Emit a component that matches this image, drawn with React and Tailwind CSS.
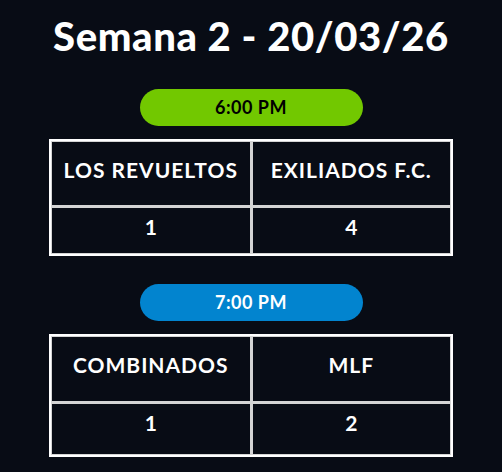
const games = [
  { time: '6:00 PM', pill: 'bg-[#72c800] text-black', home: 'LOS REVUELTOS', away: 'EXILIADOS F.C.', hs: 1, as: 4, head: 'h-[63px]', score: 'h-[45px]' },
  { time: '7:00 PM', pill: 'bg-[#0284cf] text-white', home: 'COMBINADOS', away: 'MLF', hs: 1, as: 2, head: 'h-[64px]', score: 'h-[50px]' },
]

function Game({ g, first }) {
  return (
    <div className={`flex flex-col items-center ${first ? 'mt-[33px]' : 'mt-[28px]'}`}>
      <div className={`w-[223px] h-[37px] rounded-full flex items-center justify-center text-[18px] tracking-[0.5px] font-bold ${g.pill}`}>
        {g.time}
      </div>
      <div className="mt-[13px] w-[404px] border-2 border-white p-px bg-[#d4d4d4]">
        <div className="grid grid-cols-2 gap-[3px]">
          <div className={`${g.head} bg-[#080c15] flex justify-center pt-[12px] text-[21px] tracking-[1px] font-bold`}>{g.home}</div>
          <div className={`${g.head} bg-[#080c15] flex justify-center pt-[12px] text-[21px] tracking-[1px] font-bold`}>{g.away}</div>
          <div className={`${g.score} bg-[#080c15] flex justify-center pt-[3px] text-[21px] font-bold`}>{g.hs}</div>
          <div className={`${g.score} bg-[#080c15] flex justify-center pt-[3px] text-[21px] font-bold`}>{g.as}</div>
        </div>
      </div>
    </div>
  )
}

export default function App() {
  return (
    <div className="w-[502px] h-[472px] bg-[#080c15] text-white overflow-hidden" style={{ fontFamily: 'Lato, "Noto Sans", sans-serif' }}>
      <h1 className="pt-[16px] text-center text-[40px] leading-[40px] tracking-[0.6px] font-black">Semana 2 - 20/03/26</h1>
      {games.map((g, i) => (
        <Game key={i} g={g} first={i === 0} />
      ))}
    </div>
  )
}
